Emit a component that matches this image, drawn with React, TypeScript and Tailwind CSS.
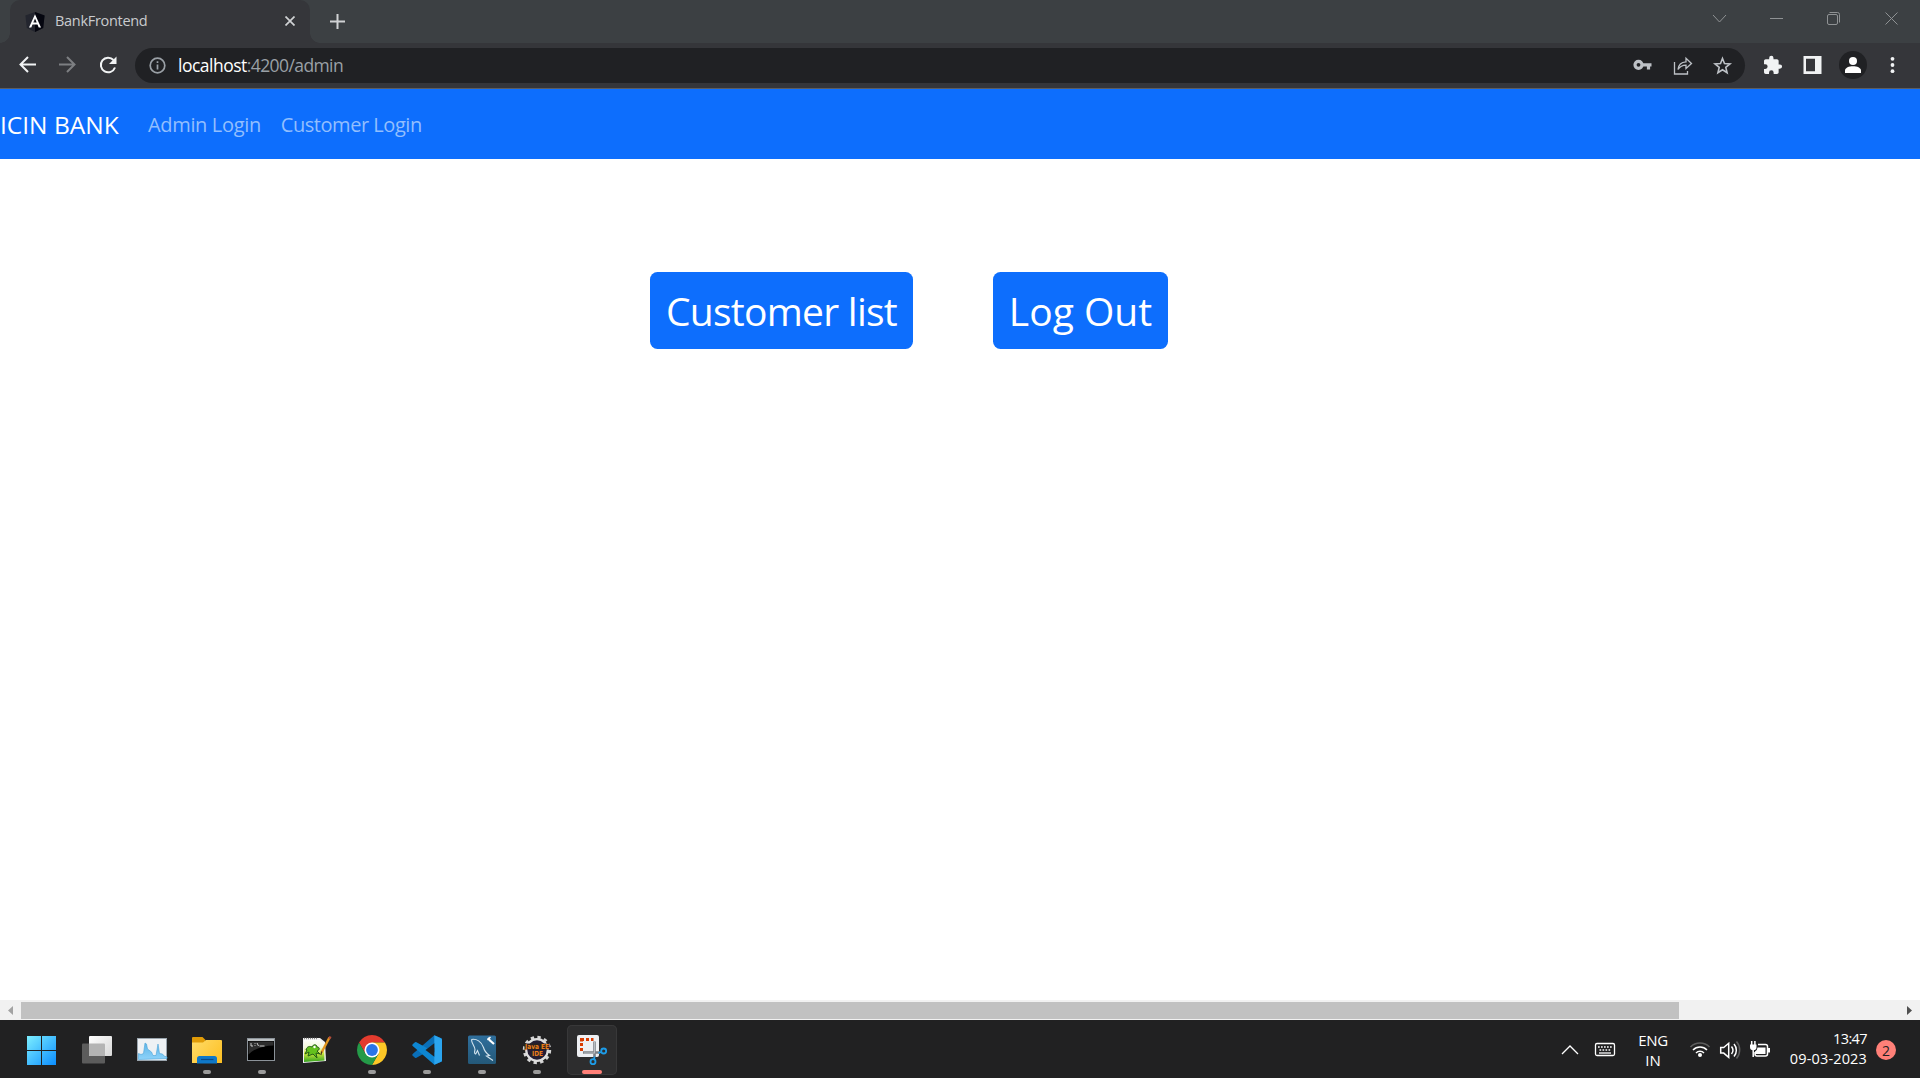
import { type ReactNode } from "react";

function AngularIcon() {
  return (
    <svg width="20" height="20" viewBox="0 0 20 20">
      <path d="M10 0 19.6 3.4 18.2 16 10 20 1.8 16 .4 3.4Z" fill="#23252e" />
      <path d="M10 0 19.6 3.4 18.2 16 10 20Z" fill="#05060f" />
      <path fillRule="evenodd" d="M10 2.2 16 15.4H13.7L12.5 12.5H7.5L6.3 15.4H4ZM10 6.4 8.3 10.6H11.7Z" fill="#fff" />
    </svg>
  );
}

const TASKS: { name: string; mark?: "idle" | "active"; art: ReactNode }[] = [
  {
    name: "Start",
    art: (
      <>
        <defs>
          <linearGradient id="win" x1="10" y1="11" x2="39" y2="40" gradientUnits="userSpaceOnUse">
            <stop offset="0" stopColor="#7defff" />
            <stop offset="1" stopColor="#0b8dff" />
          </linearGradient>
        </defs>
        <path d="M10 11h14v14H10zM25 11h14v14H25zM10 26h14v14H10zM25 26h14v14H25z" fill="url(#win)" />
      </>
    ),
  },
  {
    name: "Task view",
    art: (
      <>
        <defs>
          <linearGradient id="tv" x1="17" y1="11" x2="40" y2="31" gradientUnits="userSpaceOnUse">
            <stop offset="0" stopColor="#fff" />
            <stop offset="1" stopColor="#d8d8d8" />
          </linearGradient>
        </defs>
        <rect x="10" y="18.5" width="23" height="20" rx="1" fill="#5c5c5c" />
        <rect x="17" y="11" width="23" height="20" rx="1" fill="url(#tv)" />
        <path d="M17 18.5h15a1 1 0 0 1 1 1V31H18a1 1 0 0 1-1-1z" fill="#b4b4b4" />
      </>
    ),
  },
  {
    name: "Monitor",
    art: (
      <>
        <defs>
          <linearGradient id="mon" x1="0" y1="18" x2="0" y2="35" gradientUnits="userSpaceOnUse">
            <stop offset="0" stopColor="#5db4e6" />
            <stop offset="1" stopColor="#8fd4fb" />
          </linearGradient>
        </defs>
        <rect x="10.5" y="13.5" width="29" height="22" fill="#eef1f4" stroke="#9aa5ae" />
        <path d="M11.5 34.5v-6l2.5 1 2.500-1 1.500-10.500 1.500 1 1 5 4 3 1.500 3.500h3l2-11.500 1.500 9.500 3 .5 1.500 2 3 1v1.500z" fill="url(#mon)" stroke="#4aa3d8" strokeWidth=".6" />
      </>
    ),
  },
  {
    name: "Files",
    mark: "idle",
    art: (
      <>
        <defs>
          <linearGradient id="fold" x1="10" y1="14" x2="40" y2="38" gradientUnits="userSpaceOnUse">
            <stop offset="0" stopColor="#ffdc69" />
            <stop offset="1" stopColor="#fdbf22" />
          </linearGradient>
        </defs>
        <path d="M10 13a1 1 0 0 1 1-1h9.500l3 3v5H10z" fill="#e09b07" />
        <path d="M10 17.500h11l3-2.500h15a1 1 0 0 1 1 1v22H10z" fill="url(#fold)" />
        <path d="M15 38.500v-5a2.500 2.500 0 0 1 2.500-2.500h15a2.500 2.500 0 0 1 2.500 2.500v5z" fill="#0f78c8" />
        <path d="M19 34.500h12.500" stroke="#0a4a88" strokeWidth="1.200" />
      </>
    ),
  },
  {
    name: "Terminal",
    mark: "idle",
    art: (
      <>
        <rect x="10.500" y="13.500" width="27" height="22" fill="#000" stroke="#8b9299" />
        <path d="M11 15h26" stroke="#d2d6da" strokeWidth="1.800" />
        <path d="M11.500 16.500h25v4c-9 0-19 3-25 9z" fill="#2d2d2d" />
        <path d="M14 18v3h2M18 18v.8m0 1.200v.8M20 18l1.500 3M22.500 21h5" stroke="#dcdcdc" strokeWidth=".9" fill="none" />
      </>
    ),
  },
  {
    name: "Editor",
    art: (
      <>
        <defs>
          <linearGradient id="npp" x1="0" y1="14" x2="0" y2="38" gradientUnits="userSpaceOnUse">
            <stop offset="0" stopColor="#fff" />
            <stop offset=".35" stopColor="#f4f8d8" />
            <stop offset=".6" stopColor="#cbe63c" />
            <stop offset="1" stopColor="#1f9a1a" />
          </linearGradient>
        </defs>
        <path d="M11 13h17l5 4 1 19-23 2z" fill="#f3f3f3" />
        <path d="M12 15h16l4 4 .500 16.500L12 37z" fill="url(#npp)" />
        <path d="M12 13.500h14" stroke="#888" strokeWidth="1.500" strokeDasharray="1 1" />
        <path d="M14 25c1-4 4-4 6-3 1-3 5-3 5 0 3 0 3 3 0 4l3 3-4-1 1 5-4-4-5 2 1-4-4 2 2-4z" fill="#64c11d" stroke="#245c16" strokeWidth="1" />
        <circle cx="22.500" cy="22" r="1.200" fill="#fff" />
        <path d="m37.500 12.500-8 15" stroke="#e2951c" strokeWidth="2.400" />
        <path d="m38.500 11.500-1.200 2.200" stroke="#b34b3a" strokeWidth="2.400" />
        <path d="m29.800 26.500-1 3.500" stroke="#443620" strokeWidth="1.200" />
      </>
    ),
  },
  {
    name: "Browser",
    mark: "idle",
    art: (
      <>
        <path d="M12.010 17.500A15 15 0 0 1 37.990 17.500L25 17.500 25 25 18.500 28.750Z" fill="#e33b2e" />
        <path d="M37.990 17.500A15 15 0 0 1 25 40L31.500 28.750 25 25V17.500Z" fill="#fdc726" />
        <path d="M25 40A15 15 0 0 1 12.010 17.500L18.500 28.750 25 25 31.500 28.750Z" fill="#249a48" />
        <circle cx="25" cy="25" r="7.500" fill="#fff" />
        <circle cx="25" cy="25" r="5.900" fill="#2a75e8" />
      </>
    ),
  },
  {
    name: "Code",
    mark: "idle",
    art: (
      <>
        <path d="M32.300 10.200 40 13.500v5L14.500 32.800a1.200 1.200 0 0 1-1.500 0l-2.300-2a1.200 1.200 0 0 1 0-1.800z" fill="#0a6fb8" />
        <path d="M32.300 39.800 40 36.500v-5L14.500 17.200a1.200 1.200 0 0 0-1.500 0l-2.300 2a1.200 1.200 0 0 0 0 1.800z" fill="#0d86d2" />
        <path d="M32.300 10.200 38.800 13.300a2 2 0 0 1 1.200 1.800v19.800a2 2 0 0 1-1.200 1.800L32.300 39.800z" fill="#2ba5ef" />
        <path d="M32.300 18.300V31.700L23.500 25z" fill="#222223" />
      </>
    ),
  },
  {
    name: "Workbench",
    mark: "idle",
    art: (
      <>
        <defs>
          <linearGradient id="sql" x1="0" y1="10" x2="0" y2="39" gradientUnits="userSpaceOnUse">
            <stop offset="0" stopColor="#2f6f9d" />
            <stop offset="1" stopColor="#245878" />
          </linearGradient>
        </defs>
        <rect x="11" y="10.500" width="28" height="28.500" rx="1.500" fill="url(#sql)" />
        <path d="M14.500 14.500c5-1 10 2 12 8 1 4 3 6 6 8l-3 .5 6.500 4.500M14.500 14.500c0 4 3 6 3.500 10-1 4 0 5 1 4l1.500-3 2 5" stroke="#d3e4ee" strokeWidth="1.100" fill="none" />
        <path d="m31 13 2 2.500 4 3.500" stroke="#fff" strokeWidth="2.200" fill="none" />
        <path d="m33.500 12-3 3" stroke="#fff" strokeWidth="1.500" />
      </>
    ),
  },
  {
    name: "Java IDE",
    mark: "idle",
    art: (
      <>
        <circle cx="25" cy="25" r="12.700" fill="none" stroke="#d5d5d5" strokeWidth="3" strokeDasharray="3.325 3.325" />
        <circle cx="25" cy="25" r="10.800" fill="#241d33" stroke="#dedede" strokeWidth="2.200" />
        <path d="M12.500 18.500h25v6h-25z" fill="#2a2020" />
        <text x="25" y="24" textAnchor="middle" fontSize="7" fontWeight="700" fill="#ec7f19" textLength="24" lengthAdjust="spacingAndGlyphs" className="font-['DejaVu_Sans']">Java EE</text>
        <text x="25.500" y="30.500" textAnchor="middle" fontSize="7" fontWeight="700" fill="#ec7f19" textLength="11" lengthAdjust="spacingAndGlyphs" className="font-['DejaVu_Sans']">IDE</text>
      </>
    ),
  },
  {
    name: "Snip",
    mark: "active",
    art: (
      <>
        <rect x="10" y="10" width="22" height="22" rx="2" fill="#eef0f3" />
        <path d="M14.500 26v-3m0-2v-3m0-1.500v-2H17m2 0h3m2 0h2.500" stroke="#d83b01" strokeWidth="3" fill="none" />
        <path d="M27.500 16.500V32M16 27.500H33" stroke="#7c8187" strokeWidth="2.600" />
        <path d="M27.500 16.500V28H17" stroke="#b9bdc2" strokeWidth="1.200" fill="none" />
        <circle cx="36.700" cy="26" r="2.500" fill="none" stroke="#1d9ce8" strokeWidth="1.800" />
        <circle cx="26" cy="36.700" r="2.500" fill="none" stroke="#1d9ce8" strokeWidth="1.800" />
        <path d="M31.500 27.800 34.500 27M27.600 31.500 27 34.500" stroke="#1d9ce8" strokeWidth="1.800" />
      </>
    ),
  },
];

function Tabs() {
  return (
    <div className="flex h-[43px] bg-[#3c4043] pl-[10px]">
      <div className="relative flex h-full w-[300px] items-center rounded-t-[10px] bg-[#35363a] pl-[15px]">
        <span className="absolute bottom-0 -left-[10px] size-[10px] bg-[radial-gradient(circle_at_0_0,#3c4043_9.5px,#35363a_10px)]" />
        <span className="absolute bottom-0 -right-[10px] size-[10px] bg-[radial-gradient(circle_at_100%_0,#3c4043_9.5px,#35363a_10px)]" />
        <AngularIcon />
        <span className="ml-[10px] -mt-px whitespace-nowrap text-[14.5px] tracking-[-0.3px] text-[#c9cbce]">BankFrontend</span>
        <svg className="absolute top-[16px] left-[275px]" width="10" height="10" viewBox="0 0 10 10">
          <path d="m.5.5 9 9m0-9-9 9" stroke="#d0d2d4" strokeWidth="1.700" />
        </svg>
      </div>
      <svg className="mt-[14px] ml-[20px]" width="15" height="15" viewBox="0 0 15 15">
        <path d="M7.500 0v15M0 7.500h15" stroke="#d0d2d4" strokeWidth="2" />
      </svg>
      <svg className="ml-auto h-[40px] w-[208px]" viewBox="1712 0 208 40" fill="none" stroke="#8f9294" strokeWidth="1">
        <path d="m1713 15 6.500 7 6.500-7M1770 18.500h13M1885.500 12.500l12 12m0-12-12 12" />
        <rect x="1827.500" y="14.500" width="10" height="10" rx="1.500" />
        <path d="M1829.500 12.500h8a2 2 0 0 1 2 2v8" />
      </svg>
    </div>
  );
}

function Toolbar() {
  return (
    <div className="flex h-[45px] items-center bg-[#35363a]">
      <svg className="h-[45px] w-[135px]" viewBox="0 43 135 45" fill="none" strokeWidth="2">
        <path d="M36 64.500H21M28 57l-7.500 7.500L28 72" stroke="#f1f3f4" />
        <path d="M59 64.500h15M67 57l7.500 7.500L67 72" stroke="#7d7f82" />
        <path d="M113.500 60A7.300 7.300 0 1 0 115 67.500" stroke="#f1f3f4" />
        <path d="M116.500 56.500V64H109z" fill="#f1f3f4" />
      </svg>
      <div className="flex h-[35px] w-[1610px] items-center rounded-full bg-[#202124]">
        <svg className="ml-[14px]" width="17" height="17" viewBox="0 0 17 17">
          <circle cx="8.500" cy="8.500" r="7.300" fill="none" stroke="#9aa0a6" strokeWidth="1.700" />
          <path d="M8.500 7.500v5M8.500 4.200v1.700" stroke="#9aa0a6" strokeWidth="1.700" />
        </svg>
        <span className="ml-[12px] whitespace-nowrap text-[17.5px] text-[#9aa0a6]">
          <span className="tracking-[-0.5px] text-white">localhost</span>
          <span className="tracking-[-0.6px]">:4200/admin</span>
        </span>
        <svg className="ml-auto h-[35px] w-[145px]" viewBox="1600 48 145 35" fill="none" stroke="#bdc1c6" strokeWidth="1.500">
          <circle cx="1638.500" cy="64.800" r="3.500" strokeWidth="3.200" />
          <path d="M1642.500 64.800h9M1648.500 65v4.500" strokeWidth="3.200" />
          <path d="M1674.500 62v12h13v-3M1678 69.500c.5-5 3.500-7.500 8-7.700V58.200l5.500 5.300-5.500 5v-3.300c-3.500 0-6 1.300-8 4.300z" strokeWidth="1.300" />
          <path d="m1722.500 58.500 2 5 5.500.4-4.200 3.500 1.300 5.300-4.600-2.900-4.600 2.900 1.300-5.300-4.200-3.500 5.500-.4z" strokeWidth="1.600" />
        </svg>
      </div>
      <svg className="h-[45px] w-[175px]" viewBox="1745 43 175 45">
        <path transform="translate(1762.300 55) scale(.86)" d="M20.500 11H19V7c0-1.100-.9-2-2-2h-4V3.500a2.500 2.500 0 0 0-5 0V5H4c-1.100 0-2 .9-2 2v3.800h1.500a2.700 2.700 0 0 1 0 5.400H2V20c0 1.100.9 2 2 2h3.800v-1.500a2.700 2.700 0 0 1 5.400 0V22H17c1.100 0 2-.9 2-2v-4h1.500a2.500 2.500 0 0 0 0-5z" fill="#f1f3f4" />
        <path fillRule="evenodd" d="M1803.500 56h18v18h-18zm2.500 2.700v12.600h9V58.700z" fill="#f1f3f4" />
        <circle cx="1853" cy="65" r="14" fill="#202124" />
        <circle cx="1853" cy="61" r="4" fill="#fff" />
        <path d="M1845 73v-2.500c0-2.700 4-4.200 8-4.200s8 1.500 8 4.200V73z" fill="#fff" />
        <circle cx="1892.500" cy="58.800" r="1.900" fill="#f1f3f4" />
        <circle cx="1892.500" cy="65" r="1.900" fill="#f1f3f4" />
        <circle cx="1892.500" cy="71.200" r="1.900" fill="#f1f3f4" />
      </svg>
    </div>
  );
}

function Taskbar() {
  return (
    <div className="flex h-[58px] bg-[#212122] text-white">
      <div className="flex gap-[5px] pt-[5px] pl-[17px]">
        {TASKS.map((t) => (
          <div
            key={t.name}
            className={`relative size-[50px] rounded-[5px] ${t.mark === "active" ? "bg-[#2d2d2e] ring-1 ring-[#383839] ring-inset" : ""}`}
          >
            <svg width="50" height="50" viewBox="0 0 50 50">{t.art}</svg>
            {t.mark === "idle" && <span className="absolute top-[45px] left-[21px] h-[4px] w-[8px] rounded-full bg-[#9b9b9b]" />}
            {t.mark === "active" && <span className="absolute top-[45px] left-[15px] h-[4px] w-[20px] rounded-full bg-[#ff8078]" />}
          </div>
        ))}
      </div>
      <svg className="ml-auto h-[58px] w-[60px]" viewBox="1560 1020 60 58" fill="none" stroke="#fff" strokeWidth="1.300">
        <path d="m1562 1054 8-8 8 8" />
        <rect x="1595.500" y="1043.500" width="19" height="12" rx="1.500" />
        <path d="M1598 1047h14" strokeWidth="1.600" strokeDasharray="1.700 1.300" />
        <path d="M1599.500 1050h11.500" strokeWidth="1.600" strokeDasharray="1.700 1.300" />
        <path d="M1599 1053h12" />
      </svg>
      <div className="flex w-[66px] flex-col items-center pt-[10px] text-[15px] leading-[20px]">
        <span className="tracking-[-0.4px]">ENG</span>
        <span>IN</span>
      </div>
      <svg className="h-[58px] w-[90px]" viewBox="1686 1020 90 58" fill="none" stroke="#fff" strokeWidth="1.500">
        <path d="M1690.500 1047a13.400 13.400 0 0 1 19 0" stroke="#5e5e5e" />
        <path d="M1693 1050a9.800 9.800 0 0 1 14 0M1696 1053a5.700 5.700 0 0 1 8 0" />
        <circle cx="1700" cy="1055" r="2" fill="#fff" stroke="none" />
        <path d="M1720.700 1047.500h3l5-4.200v14l-5-4.200h-3zM1731.500 1046.500a6 6 0 0 1 0 7.500M1734 1044a9.500 9.500 0 0 1 0 12.500" />
        <path d="M1736.500 1041.500a13 13 0 0 1 0 17" stroke="#5e5e5e" />
        <path d="M1758 1044.500h7.500a2 2 0 0 1 2 2v7.500a2 2 0 0 1-2 2h-8.500a2 2 0 0 1-2-2v-2" />
        <path d="M1757.500 1047.500q-.2 3-2.500 4v2.500h10.500v-6.500zM1768 1048h2v4.500h-2z" fill="#fff" stroke="none" />
        <path d="M1750 1044.500h6.500v2.500a3.200 3.200 0 0 1-6.500 0z" fill="#fff" stroke="none" />
        <path d="M1751.700 1041v4M1754.900 1041v4M1753.200 1049v8" />
      </svg>
      <div className="flex w-[91px] flex-col items-end pt-[9px] text-[14.5px] leading-[20px]">
        <span className="tracking-[-0.6px] whitespace-nowrap">13:47</span>
        <span className="tracking-[0.15px] whitespace-nowrap">09-03-2023</span>
      </div>
      <div className="mt-[20px] mr-[24px] ml-[9px] flex size-[20px] items-center justify-center rounded-full bg-[#ff8078] text-[14px] text-[#222]">2</div>
    </div>
  );
}

export default function App() {
  return (
    <div className="flex h-[1078px] w-[1920px] flex-col overflow-hidden bg-white font-['Open_Sans','Noto_Sans',sans-serif]">
      <Tabs />
      <Toolbar />
      <div className="h-px bg-[#5c5e62]" />
      <nav className="flex h-[70px] items-center bg-[#0d6efd] pt-[2px] whitespace-nowrap">
        <span className="w-[148px] text-[24.5px] text-white">ICIN BANK</span>
        <span className="text-[20px] tracking-[-0.34px] text-[#92befe]">Admin Login</span>
        <span className="ml-[20px] text-[20px] tracking-[-0.46px] text-[#92befe]">Customer Login</span>
      </nav>
      <main className="flex flex-1 items-start gap-[80px] pt-[113px] pl-[650px]">
        <button className="flex h-[77px] w-[263px] shrink-0 items-center justify-center rounded-[7.5px] bg-[#0d6efd] pt-[2px] text-[39px] tracking-[-0.75px] whitespace-nowrap text-white">
          Customer list
        </button>
        <button className="flex h-[77px] w-[175px] shrink-0 items-center justify-center rounded-[7.5px] bg-[#0d6efd] pt-[2px] text-[39px] whitespace-nowrap text-white">
          Log Out
        </button>
      </main>
      <div className="flex h-[20px] items-center bg-[#f1f1f1]">
        <svg className="h-[20px] w-[21px]" viewBox="0 0 21 20"><path d="M13 6v9l-5-4.500z" fill="#a3a3a3" /></svg>
        <div className="mt-px h-[17px] w-[1658px] bg-[#c1c1c1]" />
        <svg className="ml-auto h-[20px] w-[21px]" viewBox="0 0 21 20"><path d="M8 6v9l5-4.500z" fill="#505050" /></svg>
      </div>
      <Taskbar />
    </div>
  );
}
